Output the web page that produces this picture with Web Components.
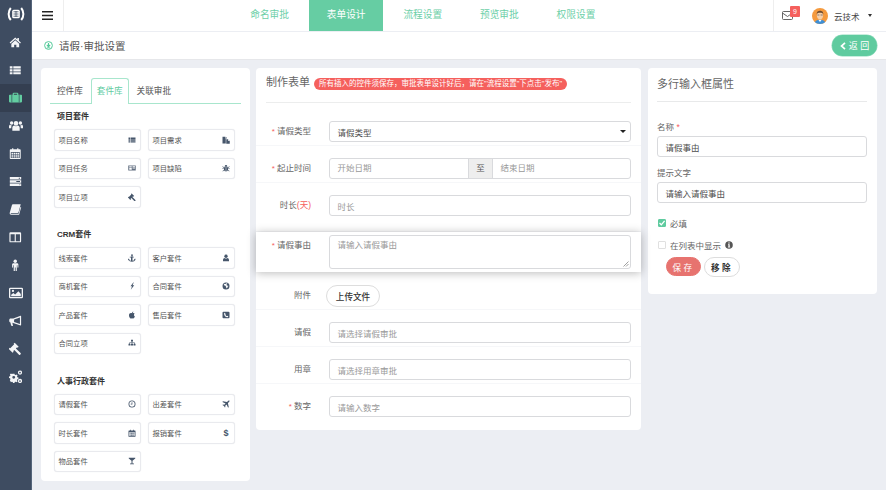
<!DOCTYPE html>
<html lang="zh"><head><meta charset="utf-8"><title>请假审批设置</title>
<style>
html,body{margin:0;padding:0;height:490px;overflow:hidden;background:#eceef3;font-family:"Liberation Sans","Noto Sans CJK SC",sans-serif;color:#555}
</style></head><body>
<app-shell></app-shell>
<script>
const ICONS={
home:'<path d="M8 2 .8 8.4l1 1.1L8 4l6.2 5.5 1-1.1-2.5-2.2V2.6h-2v1.8z"/><path d="M8 5.4 3 9.8v4.7h3.6v-3.4h2.8v3.4H13V9.800z"/>',
thlist:'<path d="M1 3h3.500v2.800H1zM5.500 3H15v2.800H5.500zM1 6.700h3.500v2.800H1zM5.500 6.700H15v2.800H5.500zM1 10.400h3.500v2.800H1zM5.500 10.400H15v2.800H5.500z"/>',
briefcase:'<path d="M5.500 2h5l1 1v1.500H15a1 1 0 0 1 1 1V13a1 1 0 0 1-1 1H1a1 1 0 0 1-1-1V5.500a1 1 0 0 1 1-1h3.500V3zM6 3.300v1.200h4V3.300z"/><path d="M3 4.500h1v9.500H3zM12 4.500h1v9.500h-1z" fill="#3e5f68"/>',
users:'<circle cx="8" cy="5" r="2.600"/><path d="M3.800 13.500V10c0-1.800 1.600-2.600 2-2.600.7.500 1.400.8 2.200.8s1.500-.3 2.200-.8c.4 0 2 .8 2 2.600v3.500z"/><circle cx="3" cy="4.600" r="2"/><circle cx="13" cy="4.600" r="2"/><path d="M0 10.500V8.300c0-1 .8-1.700 1.200-1.700.5.400 1 .6 1.700.6.300.2-.1.500 0 .9-.2.400-.3 1-.3 2.400zM16 10.500V8.300c0-1-.8-1.700-1.200-1.700-.5.400-1 .6-1.700.6-.3.200.1.500 0 .9.200.400.3 1 .3 2.400z"/>',
calendar:'<path fill-rule="evenodd" d="M2 3h2V1.500h1.500V3h5V1.500H12V3h2a1 1 0 0 1 1 1v10.500a1 1 0 0 1-1 1H2a1 1 0 0 1-1-1V4a1 1 0 0 1 1-1zm.3 3.500v7.700h11.400V6.500z"/><path d="M3.200 7.300h2v1.600h-2zM5.900 7.300h2v1.600h-2zM8.500 7.300h2v1.600h-2zM11 7.300h1.900v1.600H11zM3.200 9.600h2v1.600h-2zM5.900 9.600h2v1.600h-2zM8.500 9.600h2v1.600h-2zM11 9.600h1.900v1.600H11zM3.200 11.800h2v1.600h-2zM5.900 11.800h2v1.600h-2zM8.500 11.800h2v1.600h-2zM11 11.800h1.900v1.600H11z"/>',
tasks:'<path fill-rule="evenodd" d="M1 2.500h14v3H1zm11 1v1h1.500v-1zM1 6.500h14v3H1zm8 1v1h4.500v-1zM1 10.500h14v3H1zm12 1v1h.8v-1z"/>',
book:'<path d="M5 1.500h10l-2.800 10.300c-.2.700-.6 1-1.300 1H2.800c-.5 0-.7.300-.7.500 0 .3.300.5.700.500h9.500l2.500-9 .8.500-2.700 9.600H2.800C1.500 14.900.7 14 .9 12.700c0-.4.200-.7.300-1.100L3.700 2.800c.2-.8.600-1.300 1.300-1.300z"/>',
columns:'<path fill-rule="evenodd" d="M2 1.500h12a1.500 1.500 0 0 1 1.500 1.500v10a1.500 1.500 0 0 1-1.500 1.500H2A1.500 1.500 0 0 1 .5 13V3A1.500 1.500 0 0 1 2 1.500zM2 4v9h5.300V4zm6.700 0v9H14V4z"/>',
male:'<circle cx="8" cy="2.800" r="2.200"/><path d="M5.800 5.400h4.400c1.200 0 1.800.8 1.800 1.800v3.300c0 .8-1.200.8-1.200 0V8H10v7c0 1-1.400 1-1.500 0v-4h-1v4c-.1 1-1.500 1-1.500 0V8h-.8v2.500c0 .8-1.200.8-1.200 0V7.200c0-1 .6-1.800 1.800-1.800z"/>',
picture:'<path fill-rule="evenodd" d="M1.500 2h13a1.500 1.500 0 0 1 1.500 1.500v9a1.500 1.500 0 0 1-1.500 1.500h-13A1.500 1.500 0 0 1 0 12.500v-9A1.500 1.500 0 0 1 1.500 2zm0 1.300v9.400h13V3.300z"/><circle cx="4.500" cy="5.600" r="1.300"/><path d="M2.500 11.800V10l2.500-2 2 1.700L10.800 6l2.700 3v2.800z"/>',
bullhorn:'<path d="M14.800 1 5.500 4.600H2c-1 0-1.700.9-1.700 2v1.200c0 1 .7 1.700 1.500 1.900l.9 3.800c.1.600 2.300.6 2.400.1l-.8-3.600 10.500 3.300c.3.100.7-.1.700-.5V1.500c0-.4-.3-.6-.7-.5zm-.8 2.100v8.400L6.500 9V5.700z" fill-rule="evenodd"/>',
gavel:'<path d="M7.300.8 12.400 6l-1.400 1.400-.7-.7-1.500 1.500 6 6a1 1 0 0 1 0 1.400l-.6.600a1 1 0 0 1-1.400 0l-6-6-1.500 1.500.7.700L4.600 13.800-.5 8.700.9 7.300l.7.700L6.600 2.900l-.7-.7z"/>',
cogs:'<path fill-rule="evenodd" d="M4.700 4.300h1.800l.3 1.300 1 .4 1.100-.7 1.300 1.300-.7 1.100.4 1 1.300.3v1.800l-1.300.3-.4 1 .7 1.100-1.300 1.300-1.100-.7-1 .4-.3 1.300H4.700l-.3-1.300-1-.4-1.100.7L1 12l.7-1.100-.4-1L0 9.600V7.800l1.300-.3.4-1L1 5.400l1.300-1.300 1.100.7 1-.4zm.9 2.700a1.700 1.700 0 1 0 0 3.400 1.700 1.700 0 0 0 0-3.400z"/><path fill-rule="evenodd" d="M13 .5a2.500 2.500 0 1 1 0 5 2.500 2.500 0 0 1 0-5zm0 1.500a1 1 0 1 0 0 2 1 1 0 0 0 0-2zM13 10.500a2.500 2.500 0 1 1 0 5 2.500 2.500 0 0 1 0-5zm0 1.500a1 1 0 1 0 0 2 1 1 0 0 0 0-2z"/>',
files:'<path d="M1 1.500h5.500V5H9.500V6H7.500v9H1zM7.500 1.500 10 4.200H7.500z"/><path d="M8.500 6.500H12V10h3.500v5.500h-7zM13 6.800 15.300 9H13z"/>',
news:'<path fill-rule="evenodd" d="M.5 3H15.500v10H1.500a1 1 0 0 1-1-1zm2 1.500v1.300h5V4.500zm0 2.500v4.500h5V7zm6.500-2.500v1.300h5V4.500zm0 2.500v1h5V7zm0 2.200v1h5v-1z" opacity=".85"/>',
bug:'<path d="M5.300 5.500C5.300 3.300 6.500 2 8 2s2.700 1.300 2.700 3.500z"/><path d="M4 6.300h8V11c0 2.300-1.700 3.800-3.500 3.800V8h-1v6.800C5.700 14.800 4 13.300 4 11z"/><path d="M1.500 4.500 4.500 7v1.300L.7 5.300zM14.500 4.500 11.500 7v1.300l3.800-3zM.5 9H4v1.200H.5zM15.500 9H12v1.200h3.500zM1 14l3.500-3 .3 1.100-3 2.700zM15 14l-3.500-3-.3 1.100 3 2.700z"/>',
anchor:'<path fill-rule="evenodd" d="M8 .5a2 2 0 0 1 1 3.700v1.300h2.500v1.500H9v6.600c1.800-.2 3.100-1 3.700-2l-1.200-.6 3-2 .5 3.600-1-.6C13.800 13.800 11.300 15.500 8 15.500s-5.800-1.700-7-3.500l-1 .6.500-3.600 3 2-1.200.6c.6 1 1.900 1.800 3.700 2V7H3.500V5.500H7V4.200A2 2 0 0 1 8 .5zm0 1.300a.7.7 0 1 0 0 1.400.7.7 0 0 0 0-1.400z"/>',
user:'<circle cx="8" cy="4.500" r="3.300"/><path d="M2 14.500V12c0-2.500 1.700-4 3.200-4 .8.700 1.800 1.100 2.800 1.100s2-.4 2.800-1.100c1.500 0 3.200 1.500 3.200 4v2.500z"/>',
bolt:'<path d="M10.500 1 5 8.500h3L5.500 15.500 12.500 6.500H9L11.500 1z"/>',
globe:'<path fill-rule="evenodd" d="M8 1a7 7 0 1 1 0 14A7 7 0 0 1 8 1zM5 3.500 3.500 5.500 5 7l2 .5 1 2 1 3.500 2-2 .5-2 1.500-1-1-.7-2.500-.3-.5-2L11 3.500 8.500 2.500 7 3.800z"/>',
apple:'<path d="M8.100 4.500C9.300 4 10.500 3.700 12 4.500c.6.300 1 .8 1.300 1.200-2.200 1.300-1.800 4.300.4 5.200-.6 1.800-2 4-3.200 4-.9 0-1.300-.6-2.400-.6s-1.500.6-2.400.6C3.900 14.900 2 11.500 2 8.800c0-3 2-4.700 3.800-4.700.9 0 1.700.4 2.300.4zM8 3.800C7.900 2.200 9.300.9 10.700.8c.1 1.600-1.300 3.100-2.700 3z"/>',
phone:'<path fill-rule="evenodd" d="M3 1.500h10A2 2 0 0 1 15 3.500v9a2 2 0 0 1-2 2H3a2 2 0 0 1-2-2v-9a2 2 0 0 1 2-2zm2.500 2c-.8.300-1.300 1-1.300 1.800 0 3.700 3 6.700 6.500 7 1 0 1.700-.5 2-1.300l-2.300-1.700-1 1c-1.200-.5-2.300-1.500-2.800-2.800l1-1z"/>',
sitemap:'<path d="M6 1.500h4V5H8.600v2H13.500v2.500H15V13h-4V9.500h1.300V8.200H8.600v1.300H10V13H6V9.500h1.400V8.200H3.700v1.300H5V13H1V9.500h1.500V7h4.900V5H6z"/>',
clock:'<path fill-rule="evenodd" d="M8 1a7 7 0 1 1 0 14A7 7 0 0 1 8 1zm0 1.700a5.300 5.300 0 1 0 0 10.600A5.300 5.300 0 0 0 8 2.700z"/><path d="M7.300 4.500h1.400v4.300H5.500V7.500h1.800z"/>',
plane:'<path d="M14.800 1.200c.6.600.3 1.700-.6 2.600L11.800 6.200 13.500 14l-1.300 1.300L9.200 8.800 6.400 11.600l.4 2.500-1 1-1.800-3.100L.9 10.200l1-1 2.500.4 2.800-2.800L.7 3.800 2 2.500l7.800 1.700L12.200 1.800c.9-.9 2-1.200 2.600-.6z"/>',
glass:'<path d="M1.500 1.500h13V3L9 7.500V13h3v1.500H4V13h3V7.500L1.500 3z"/>',
};
function ic(n,s,c){return `<svg width="${s}" height="${s}" viewBox="0 0 16 16" fill="${c||'currentColor'}" aria-hidden="true">${ICONS[n]}</svg>`;}
function shadow(el,html){el.attachShadow({mode:'open'}).innerHTML=html;}

class SideBar extends HTMLElement{connectedCallback(){
 const names=['home','thlist','briefcase','users','calendar','tasks','book','columns','male','picture','bullhorn','gavel','cogs'];
 const size={users:14,picture:14,cogs:13.500,tasks:13,briefcase:13};
 shadow(this,`<style>
 :host{display:block;width:31px;flex:none;background:#3e4c61;border-right:1px solid #55657b;height:490px;color:#f4f5f7}
 .logo{height:28px;display:flex;align-items:center;justify-content:center}
 .n{height:27.900px;display:flex;align-items:center;justify-content:center}
 .n.a{background:#343f51;color:#63cda1}
 </style>
 <div class="logo"><svg width="18" height="14" viewBox="0 0 18 14"><path d="M3.800 1C.9 4.500.9 9.500 3.800 13" fill="none" stroke="#fff" stroke-width="2"/><path d="M14.200 1C17.100 4.500 17.100 9.500 14.200 13" fill="none" stroke="#fff" stroke-width="2"/><rect x="5.200" y="2.700" width="7.600" height="8.600" rx="1.500" fill="#fff"/><path d="M6.500 4.800h5M6.500 7h5M6.500 9.200h5M9 4v6" stroke="#3e4c61" stroke-width=".8"/></svg></div>
 ${names.map(n=>`<div class="n ${n==='briefcase'?'a':''}">${ic(n,size[n]||12.500)}</div>`).join('')}`);
}}
customElements.define('side-bar',SideBar);

class TopBar extends HTMLElement{connectedCallback(){
 const tabs=['命名审批','表单设计','流程设置','预览审批','权限设置'];
 shadow(this,`<style>
 :host{display:flex;height:31px;background:#fff;flex:none;align-items:stretch}
 .burger{width:31px;flex:none;border-right:1px solid #eee;display:flex;align-items:center;justify-content:center}
 .tabs{display:flex;margin-left:167.300px;flex:1;min-width:0}
 .t{width:76.600px;flex:none;text-align:center;line-height:30px;height:30.500px;font-size:9.700px;color:#6dcfa8;box-sizing:border-box}
 .t.a{background:#66cda3;background-clip:content-box;padding:0 1.300px;color:#fff}
 .right{width:112px;flex:none;border-left:1px solid #eee;display:flex;align-items:center;position:relative}
 .mail{margin-left:8px;display:flex;color:#444}
 .badge{position:absolute;left:16px;top:6px;width:10px;height:11px;background:#f5605d;color:#fff;font-size:7px;line-height:11px;text-align:center;border-radius:1px}
 .av{margin-left:19px;display:flex}
 .name{margin-left:6px;font-size:8.500px;color:#444}
 .caret{margin-left:8px;width:0;height:0;border:2.500px solid transparent;border-top:3px solid #333;border-bottom:0}
 </style>
 <div class="burger"><svg width="11" height="9" viewBox="0 0 11 9"><path d="M0 .7h11M0 4.500h11M0 8.300h11" stroke="#222" stroke-width="1.400"/></svg></div>
 <div class="tabs">${tabs.map((t,i)=>`<div class="t ${i==1?'a':''}">${t}</div>`).join('')}</div>
 <div class="right">
  <span class="mail"><svg width="11" height="9" viewBox="0 0 11 9" fill="none" stroke="#555" stroke-width=".9"><rect x=".5" y=".5" width="10" height="8" rx="1"/><path d="M.5 2 5.500 5.500 10.500 2"/></svg></span>
  <span class="badge">9</span>
  <span class="av"><svg width="16" height="16" viewBox="0 0 16 16"><defs><clipPath id="c"><circle cx="8" cy="8" r="8"/></clipPath></defs><g clip-path="url(#c)"><rect width="16" height="16" fill="#f59a3e"/><path d="M2.500 16c0-3 2-4.300 5.500-4.300s5.500 1.300 5.500 4.300z" fill="#3d8fd6"/><path d="M6.300 11.700h3.400L8 14z" fill="#fff"/><ellipse cx="8" cy="7.600" rx="3.100" ry="3.700" fill="#f6cfa8"/><path d="M4.700 6.500C4.500 3.600 6.200 2.800 8 2.800s3.500.8 3.300 3.700C10.800 5 9.500 4.800 8 4.800s-2.800.2-3.300 1.700z" fill="#6b4a30"/><path d="M5.300 7h2.100M8.600 7h2.100" stroke="#556" stroke-width=".7"/></g></svg></span>
  <span class="name">云技术</span><span class="caret"></span>
 </div>`);
}}
customElements.define('top-bar',TopBar);

class PageHead extends HTMLElement{connectedCallback(){
 shadow(this,`<style>
 :host{display:flex;align-items:center;height:27px;margin-top:1px;background:#fff;flex:none;border-bottom:1px solid #e6e7ea;padding:0 9px 0 12px}
 .ttl{font-size:10.500px;color:#555;margin-left:6px;flex:1}
 .back{width:45px;height:21px;border-radius:10.500px;background:#5fcb9f;color:#fff;font-size:9px;display:flex;align-items:center;justify-content:center;gap:3px;box-shadow:0 0 0 .5px #8fdcbd}
 .back span{letter-spacing:2.500px;margin-right:-2.500px}
 </style>
 <svg width="9" height="9" viewBox="0 0 9 9" fill="none" stroke="#55c99a"><circle cx="4.500" cy="4.500" r="3.900" stroke-width="1"/><path d="M4.500 2v3.300M2.900 3.900 4.500 5.800 6.100 3.900" stroke-width="1.100"/><path d="M2.800 6.800h3.400" stroke-width=".8"/></svg>
 <span class="ttl">请假·审批设置</span>
 <span class="back"><svg width="6" height="8" viewBox="0 0 6 8" fill="none" stroke="#fff" stroke-width="1.700"><path d="M5 .8 1.500 4 5 7.200"/></svg><span>返回</span></span>`);
}}
customElements.define('page-head',PageHead);

class KitItem extends HTMLElement{connectedCallback(){
 const name=this.getAttribute('icon');
 shadow(this,`<style>
 :host{display:flex;align-items:center;justify-content:space-between;height:21.500px;box-sizing:border-box;background:#fff;border:1px solid #e9eaee;border-radius:3px;box-shadow:0 0 1px #e2e3e8;padding:0 4px 0 3.500px;font-size:7.300px;color:#555}
 svg{display:block}
 .d{font:bold 9px "Liberation Sans";color:#46566b;width:8px;text-align:center}
 </style><slot></slot>${name==='dollar'?'<span class="d">$</span>':`<span style="color:#46566b;display:flex">${ic(name,8)}</span>`}`);
}}
customElements.define('kit-item',KitItem);

class KitGroup extends HTMLElement{connectedCallback(){
 shadow(this,`<style>
 :host{display:block;margin:0 15px 20.600px 13px}
 h4{margin:0 0 0 3px;font-size:8px;line-height:14px;font-weight:bold;color:#333}
 .g{display:grid;grid-template-columns:87px 87px;column-gap:7px;row-gap:7px;margin-top:5px}
 </style><h4>${this.getAttribute('title')}</h4><div class="g"><slot></slot></div>`);
}}
customElements.define('kit-group',KitGroup);

class KitLibrary extends HTMLElement{connectedCallback(){
 shadow(this,`<style>
 :host{display:block;width:209px;height:413px;flex:none;background:#fff;border-radius:4px;padding-top:10px;box-sizing:border-box}
 .tabs{display:flex;margin:0 9px;height:26px;border-bottom:1.500px solid #a8e6cd;box-sizing:border-box;font-size:8.600px;color:#555;line-height:26px}
 .tb{padding:0 8px 0 7px}
 .tb.a{color:#5fcb9f;border:1.500px solid #a8e6cd;border-bottom:0;border-radius:3px 3px 0 0;background:#fff;height:26px;box-sizing:border-box;padding:0 5px;line-height:24px}
 .tb.l{padding:0 0 0 8px}
 .s1{margin-top:6px}
 </style>
 <div class="tabs"><span class="tb">控件库</span><span class="tb a">套件库</span><span class="tb l">关联审批</span></div>
 <div class="s1"><slot></slot></div>`);
}}
customElements.define('kit-library',KitLibrary);

class FormRow extends HTMLElement{connectedCallback(){
 const req=this.hasAttribute('req');
 shadow(this,`<style>
 :host{display:flex;box-sizing:border-box;height:37px;padding:12px 10px 0 10px;border-bottom:1px solid #f6f7f9;background:#fff;position:relative}
 :host([hi]){height:40px;padding-top:3px;box-shadow:0 1px 9px rgba(0,0,0,.28);z-index:2;border:0;margin:0}
 :host([btn]){padding-top:13px;height:38px}
 label{width:45px;flex:none;text-align:right;font-size:8.500px;line-height:21px;color:#666}
 :host([hi]) label{line-height:20px}
 .req{color:#f5605d;font-size:8px}
 .f{margin-left:18px;flex:1;min-width:0;display:flex}
 :host([btn]) .f{margin-left:15px}
 </style><label>${req?'<span class="req">* </span>':''}<slot name="l"></slot></label><div class="f"><slot></slot></div>`);
}}
customElements.define('form-row',FormRow);

class TextBox extends HTMLElement{connectedCallback(){
 const v=this.hasAttribute('val');
 shadow(this,`<style>
 :host{display:flex;flex:1;min-width:0;align-items:center;height:21px;box-sizing:border-box;border:1px solid #d9dadd;border-radius:3px;padding:0 7.500px;font-size:8.500px;color:${v?'#4d4d4d':'#999'};background:#fff;position:relative}
 :host([area]){height:34px;align-items:flex-start;line-height:18px}
 .car{position:absolute;right:4px;top:8px;width:0;height:0;border:3px solid transparent;border-top:3.500px solid #222;border-bottom:0}
 .gr{position:absolute;right:1px;bottom:1px}
 </style><slot></slot>${this.hasAttribute('select')?'<span class="car"></span>':''}${this.hasAttribute('area')?'<svg class="gr" width="6" height="6" viewBox="0 0 6 6" stroke="#777" stroke-width=".7"><path d="M.5 5.500 5.500.5M3 5.500 5.500 3"/></svg>':''}`);
}}
customElements.define('text-box',TextBox);

class DateRange extends HTMLElement{connectedCallback(){
 shadow(this,`<style>
 :host{display:flex;flex:1;height:21px;box-sizing:border-box;border:1px solid #d9dadd;border-radius:3px;font-size:8.500px;color:#999;line-height:19px;overflow:hidden}
 .a{width:138px;padding-left:7.500px;flex:none;box-sizing:border-box}
 .z{width:25px;flex:none;text-align:center;background:#eee;color:#555;border-left:1px solid #d9dadd;border-right:1px solid #d9dadd;box-sizing:border-box}
 .e{flex:1;padding-left:7.500px}
 </style><span class="a">开始日期</span><span class="z">至</span><span class="e">结束日期</span>`);
}}
customElements.define('date-range',DateRange);

class FormCard extends HTMLElement{connectedCallback(){
 shadow(this,`<style>
 :host{display:block;width:385px;height:362px;flex:none;background:#fff;border-radius:4px;box-sizing:border-box}
 .hd{margin:0 10px;height:35px;border-bottom:1px solid #eceded;display:flex;align-items:center;gap:4px;box-sizing:border-box;padding-bottom:6px}
 h3{margin:0;font-size:11px;font-weight:normal;color:#666;line-height:14px}
 .tip{background:#f5605d;color:#fff;font-size:7.500px;height:12px;line-height:12px;border-radius:6px;padding:0 5px;white-space:nowrap;margin-top:3px}
 .b{padding-top:6px}
 </style>
 <div class="hd"><h3>制作表单</h3><span class="tip">所有插入的控件须保存，审批表单设计好后，请在"流程设置"下点击"发布"</span></div>
 <div class="b"><slot></slot></div>`);
}}
customElements.define('form-card',FormCard);

class PillButton extends HTMLElement{connectedCallback(){
 shadow(this,`<style>
 :host{display:inline-flex;align-items:center;justify-content:center;box-sizing:border-box;height:21px;border-radius:11px;font-size:8.600px;background:#fff;border:1px solid #ddd;color:#333;font-weight:500}
 :host([kind=red]){background:#e7736f;border-color:#e7736f;color:#fff;letter-spacing:2.500px;font-weight:400}
 :host([kind=plain]){letter-spacing:2.500px;font-weight:bold}
 </style><slot></slot>`);
}}
customElements.define('pill-button',PillButton);

class PropPanel extends HTMLElement{connectedCallback(){
 shadow(this,`<style>
 :host{display:block;width:229px;height:226px;flex:none;background:#fff;border-radius:4px;padding:0 10px 0 9px;box-sizing:border-box;font-size:8.500px;color:#666}
 h3{margin:0;height:34px;border-bottom:1px solid #e8e9ea;font-size:11px;line-height:32px;font-weight:normal;color:#666;box-sizing:border-box}
 .l{line-height:14px;margin:18px 0 2px}
 .l.b{margin-top:9px}
 .s{color:#f5605d}
 .c{display:flex;align-items:center;gap:4px;height:14px}
 .box{width:8px;height:8px;margin-left:1px;border:1px solid #e0e0e0;box-sizing:border-box;border-radius:1px;background:#fff;display:flex}
 .box.on{background:#5fcb9f;border-color:#5fcb9f}
 .btns{display:flex;gap:3px;margin:5px 0 0 9px}
 </style>
 <h3>多行输入框属性</h3>
 <div class="l">名称 <span class="s">*</span></div><text-box val>请假事由</text-box>
 <div class="l b">提示文字</div><text-box val>请输入请假事由</text-box>
 <div class="c" style="margin-top:13px"><span class="box on"><svg width="8" height="8" viewBox="0 0 8 8" fill="none" stroke="#fff" stroke-width="1.300" style="margin:-1px"><path d="M1.500 4 3.300 5.800 6.600 1.800"/></svg></span>必填</div>
 <div class="c" style="margin-top:8px"><span class="box"></span>在列表中显示 <svg width="8" height="8" viewBox="0 0 8 8"><circle cx="4" cy="4" r="3.800" fill="#555"/><path d="M3.300 1.400h1.400v1.200H3.300zM3 3.300h1.700v2.400h.5v.9H2.900v-.9h.5V4.100H3z" fill="#fff"/></svg></div>
 <div class="btns"><pill-button kind="red" style="width:35px;height:19px">保存</pill-button><pill-button kind="plain" style="width:36px;height:20px">移除</pill-button></div>`);
}}
customElements.define('prop-panel',PropPanel);

class AppShell extends HTMLElement{connectedCallback(){
 const kit=(t,arr)=>`<kit-group title="${t}">${arr.map(([n,i])=>`<kit-item icon="${i}">${n}</kit-item>`).join('')}</kit-group>`;
 const lab=(s)=>`<span slot="l">${s}</span>`;
 shadow(this,`<style>
 :host{display:flex;width:886px;height:490px;overflow:hidden;background:#eceef3}
 .main{flex:1;min-width:0;display:flex;flex-direction:column}
 .cols{display:flex;align-items:flex-start;padding:8px 9px 0 9px;gap:6px}
 prop-panel{margin-left:1px}
 </style>
 <side-bar></side-bar>
 <div class="main">
 <top-bar></top-bar>
 <page-head></page-head>
 <div class="cols">
 <kit-library>
  ${kit('项目套件',[['项目名称','thlist'],['项目需求','files'],['项目任务','news'],['项目缺陷','bug'],['项目立项','gavel']])}
  ${kit('CRM套件',[['线索套件','anchor'],['客户套件','user'],['商机套件','bolt'],['合同套件','globe'],['产品套件','apple'],['售后套件','phone'],['合同立项','sitemap']])}
  ${kit('人事行政套件',[['请假套件','clock'],['出差套件','plane'],['时长套件','calendar'],['报销套件','dollar'],['物品套件','glass']])}
 </kit-library>
 <form-card>
  <form-row req>${lab('请假类型')}<text-box val select>请假类型</text-box></form-row>
  <form-row req>${lab('起止时间')}<date-range></date-range></form-row>
  <form-row style="height:49px">${lab('时长<span style="color:#f5605d">(天)</span>')}<text-box>时长</text-box></form-row>
  <form-row req hi>${lab('请假事由')}<text-box area>请输入请假事由</text-box></form-row>
  <form-row btn>${lab('附件')}<pill-button style="width:54px;height:22px">上传文件</pill-button></form-row>
  <form-row>${lab('请假')}<text-box>请选择请假审批</text-box></form-row>
  <form-row>${lab('用章')}<text-box>请选择用章审批</text-box></form-row>
  <form-row req style="border:0">${lab('数字')}<text-box>请输入数字</text-box></form-row>
 </form-card>
 <prop-panel></prop-panel>
 </div></div>`);
}}
customElements.define('app-shell',AppShell);
</script></body></html>
